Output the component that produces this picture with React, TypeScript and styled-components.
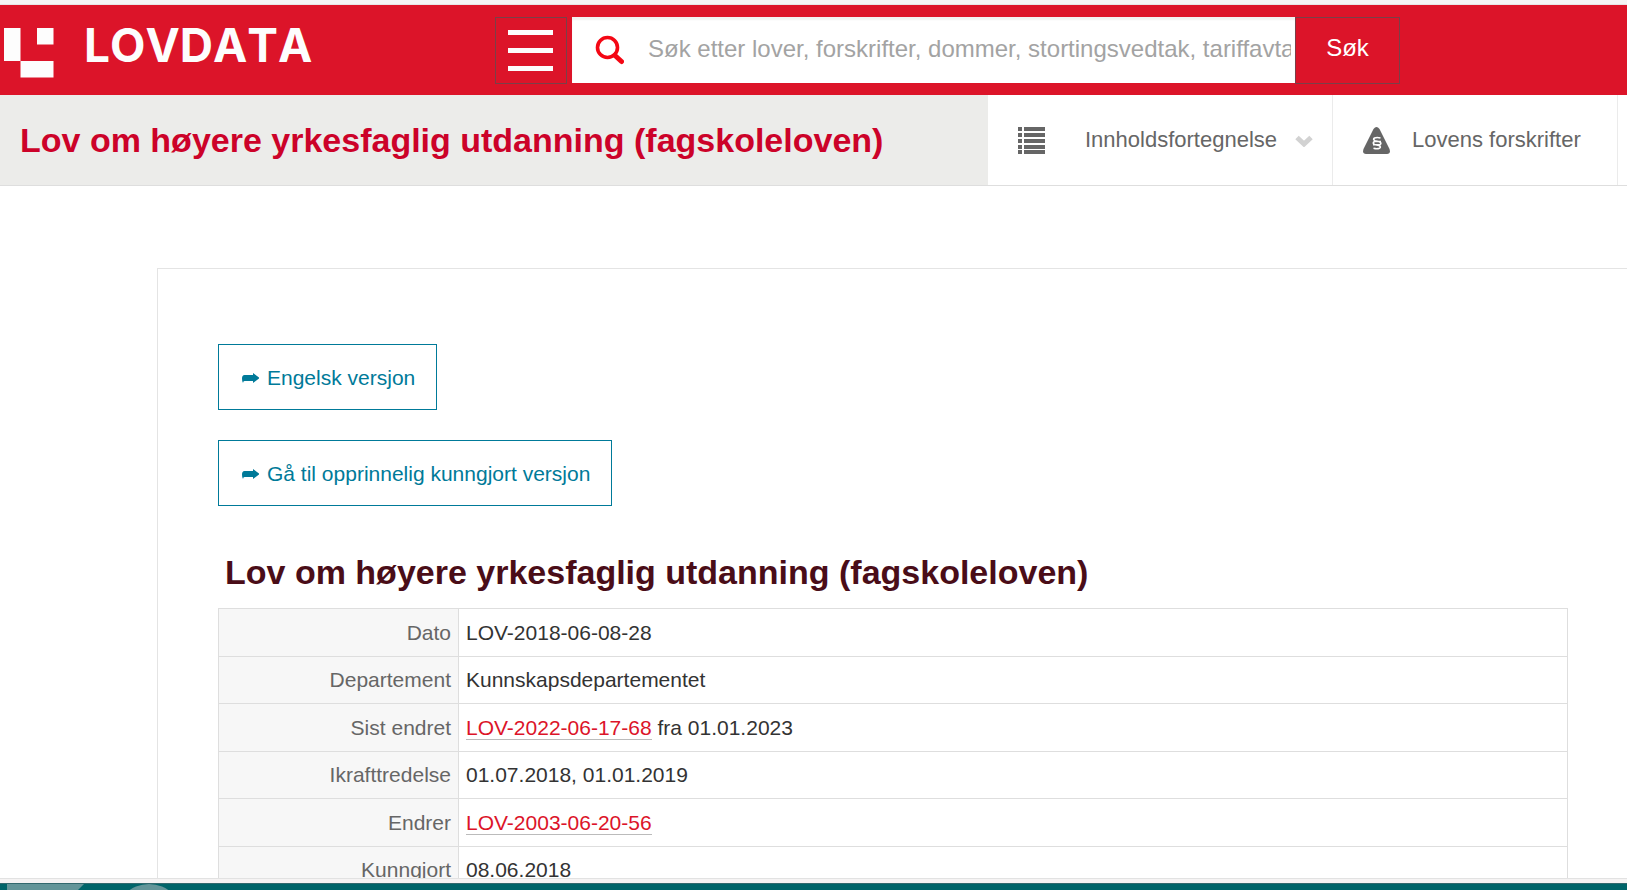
import React from "react";
import styled, { createGlobalStyle } from "styled-components";

const GlobalStyle = createGlobalStyle`
  *, *::before, *::after { box-sizing: border-box; }
  body {
    margin: 0;
    background: #fff;
    color: #333;
    font-family: Arial, "Liberation Sans", sans-serif;
    font-size: 21px;
    line-height: 24px;
  }
  button, input { font: inherit; }
  svg { flex: none; }
`;

const Screen = styled.div`
  display: flex;
  flex-direction: column;
  height: 100vh;
  overflow: hidden;
`;

const WindowTop = styled.div`
  flex: none;
  height: 5px;
  background: #f5f5f5;
  border-bottom: 1px solid #e6e6e6;
`;

const Header = styled.header`
  flex: none;
  display: flex;
  align-items: center;
  height: 90px;
  background: #dc1429;
`;

const Brand = styled.a`
  flex: none;
  display: flex;
  align-items: flex-start;
  gap: 30px;
  width: 495px;
  height: 56px;
  padding: 6px 0 0 4px;
  color: #fdfdfd;
  text-decoration: none;
`;

const BrandName = styled.span`
  font-family: Inter, sans-serif;
  font-kerning: none;
  font-size: 46px;
  font-weight: 700;
  line-height: 34px;
`;

const MenuButton = styled.button`
  flex: none;
  display: flex;
  flex-direction: column;
  justify-content: space-between;
  width: 72px;
  height: 67px;
  margin-right: 5px;
  padding: 12px 13px 12px 12px;
  border: 1px solid #7a3f48;
  background: none;
`;

const MenuLine = styled.span`
  height: 5px;
  background: #fdfdfd;
`;

const SearchForm = styled.form`
  flex: 1;
  display: flex;
  align-items: center;
  min-width: 0;
  margin-right: 227px;
`;

const SearchField = styled.label`
  flex: 1;
  display: flex;
  align-items: center;
  gap: 24px;
  min-width: 0;
  height: 66px;
  padding: 0 4px 0 23px;
  background: #fff;
  box-shadow: inset 0 3px 2px #f2f2f2;
`;

const SearchInput = styled.input`
  flex: 1;
  min-width: 0;
  padding: 0 0 2px;
  border: 0;
  outline: 0;
  background: none;
  font-size: 24px;
  &::placeholder { color: #a3a3a3; opacity: 1; }
`;

const SearchButton = styled.button`
  flex: none;
  width: 105px;
  height: 67px;
  padding: 0 0 4px;
  border: 1px solid #7a3f48;
  background: none;
  color: #fff;
  font-size: 24px;
`;

const TitleBar = styled.div`
  flex: none;
  display: flex;
  height: 91px;
  border-bottom: 1px solid #dedede;
`;

const BarTitle = styled.div`
  flex: 1;
  display: flex;
  align-items: center;
  min-width: 0;
  padding-left: 20px;
  background: #ececea;
  color: #cc0229;
  font-size: 34px;
  font-weight: 700;
  white-space: nowrap;
`;

const BarNav = styled.nav`
  flex: none;
  display: flex;
  padding-right: 9px;
`;

const BarItem = styled.a<{ $width: number; $gap: number }>`
  display: flex;
  align-items: center;
  width: ${(p) => p.$width}px;
  padding: 0 19px 0 30px;
  border-right: 1px solid #ebebeb;
  color: #666;
  font-size: 22px;
  text-decoration: none;
  white-space: nowrap;

  > svg { margin-right: ${(p) => p.$gap}px; }
`;

const ItemEnd = styled.span`
  display: flex;
  margin-left: auto;
`;

const Content = styled.main`
  flex: 1;
  min-height: 0;
  overflow: hidden;
  padding: 82px 0 0 157px;
`;

const Document = styled.article`
  padding: 75px 59px 60px 60px;
  border: 1px solid #e4e4e4;
  border-right: 0;
`;

const Actions = styled.div`
  display: flex;
  flex-direction: column;
  align-items: flex-start;
  gap: 30px;
`;

const ActionLink = styled.a`
  display: flex;
  align-items: center;
  gap: 8px;
  height: 66px;
  padding: 2px 21px 0 23px;
  border: 1px solid #007a99;
  color: #007a99;
  text-decoration: none;
`;

const Heading = styled.h1`
  margin: 46px 0 16px;
  padding-left: 7px;
  color: #4a0d18;
  font-size: 34px;
  line-height: 40px;
`;

const MetaTable = styled.table`
  width: 100%;
  border-collapse: collapse;
  table-layout: fixed;
`;

const MetaRow = styled.tr`
  height: 48px;
  &:nth-child(even) { height: 47px; }
`;

const MetaLabel = styled.th`
  width: 240px;
  padding: 0 7px;
  border: 1px solid #dedede;
  background: #f7f7f7;
  color: #666;
  font-weight: 400;
  text-align: right;
`;

const MetaValue = styled.td`
  padding: 0 7px;
  border: 1px solid #dedede;
`;

const LawLink = styled.a`
  border-bottom: 1px solid #bbb;
  color: #dc1429;
  text-decoration: none;
`;

const WindowBottom = styled.div`
  flex: none;
  height: 5px;
  border-top: 1px solid #e2e2e2;
  background: #f5f3f3;
`;

const Desktop = styled.footer`
  flex: none;
  display: flex;
  height: 7px;
  background: #006469;
  border-top: 1px solid #33696e;
`;

const LogoMark = () => (
  <svg width="50" height="50" viewBox="0 0 50 50" fill="#fdfdfd" aria-hidden="true">
    <path d="M0 0h16.5v33H0zM33 0h16.5v16.5H33zM16.5 33h33v16.5h-33z" />
  </svg>
);

const SearchIcon = () => (
  <svg width="29" height="30" viewBox="0 0 29 30" fill="none" stroke="#f40714" aria-hidden="true">
    <circle cx="12.500" cy="12.500" r="10" strokeWidth="3.600" />
    <path d="M20 20.500l6.500 6" strokeWidth="5" strokeLinecap="round" />
  </svg>
);

const ListIcon = () => (
  <svg width="27" height="27" viewBox="0 0 27 27" fill="#666" aria-hidden="true">
    {[0, 6, 12, 18, 23].map((y) => (
      <path key={y} d={`M0 ${y}h4v4H0zM6 ${y}h21v4H6z`} />
    ))}
  </svg>
);

const ParagraphIcon = () => (
  <svg width="27" height="27" viewBox="0 0 27 27" aria-hidden="true">
    <path d="M10.500 2Q13.500-2 16.500 2L26.500 22Q28 27 24 27H3Q-1 27 .500 22z" fill="#666" />
    <path
      d="M17.500 11q-3.500-1-6 0q-2 1.500 .5 2.700l4.500 1q2.500 1.300 .5 3h-7M18 14.500h-6.500q-2.500 1.500 0 3l4.500 1q2.500 1.300 .5 2.700q-2.500 1-6 0"
      fill="none"
      stroke="#fff"
      strokeWidth="1.600"
    />
  </svg>
);

const ChevronIcon = () => (
  <svg width="18" height="13" viewBox="0 0 18 13" fill="none" stroke="#d2d2d2" aria-hidden="true">
    <path d="M2 3.500l7 6.500l7-6.500" strokeWidth="5" />
  </svg>
);

const ArrowIcon = () => (
  <svg width="17" height="11" viewBox="0 0 17 11" fill="#007a99" aria-hidden="true">
    <path d="M11 0l6.500 5l-6.500 5V8H2.500Q1.200 8 1 10Q0 9 0 5.500Q0 2 2.500 2H11z" />
  </svg>
);

const DesktopShapes = () => (
  <svg width="180" height="6" viewBox="0 0 180 6" fill="#639599" aria-hidden="true">
    <path d="M7 0H84L78 6H7z" />
    <circle cx="149" cy="34" r="34" />
  </svg>
);

const rows: { label: string; value?: string; law?: string }[] = [
  { label: "Dato", value: "LOV-2018-06-08-28" },
  { label: "Departement", value: "Kunnskapsdepartementet" },
  { label: "Sist endret", law: "LOV-2022-06-17-68", value: " fra 01.01.2023" },
  { label: "Ikrafttredelse", value: "01.07.2018, 01.01.2019" },
  { label: "Endrer", law: "LOV-2003-06-20-56" },
  { label: "Kunngjort", value: "08.06.2018" },
];

const title = "Lov om høyere yrkesfaglig utdanning (fagskoleloven)";

export default function App() {
  return (
    <Screen>
      <GlobalStyle />
      <WindowTop />
      <Header>
        <Brand href="#">
          <LogoMark />
          <BrandName>LOVDATA</BrandName>
        </Brand>
        <MenuButton type="button" aria-label="Meny">
          <MenuLine />
          <MenuLine />
          <MenuLine />
        </MenuButton>
        <SearchForm role="search" onSubmit={(e) => e.preventDefault()}>
          <SearchField>
            <SearchIcon />
            <SearchInput
              type="text"
              aria-label="Søk"
              placeholder="Søk etter lover, forskrifter, dommer, stortingsvedtak, tariffavtaler"
            />
          </SearchField>
          <SearchButton type="submit">Søk</SearchButton>
        </SearchForm>
      </Header>
      <TitleBar>
        <BarTitle>{title}</BarTitle>
        <BarNav>
          <BarItem href="#innhold" $width={345} $gap={40}>
            <ListIcon />
            Innholdsfortegnelse
            <ItemEnd>
              <ChevronIcon />
            </ItemEnd>
          </BarItem>
          <BarItem href="#forskrifter" $width={285} $gap={22}>
            <ParagraphIcon />
            Lovens forskrifter
          </BarItem>
        </BarNav>
      </TitleBar>
      <Content>
        <Document>
          <Actions>
            <ActionLink href="#engelsk">
              <ArrowIcon />
              Engelsk versjon
            </ActionLink>
            <ActionLink href="#kunngjort">
              <ArrowIcon />
              Gå til opprinnelig kunngjort versjon
            </ActionLink>
          </Actions>
          <Heading>{title}</Heading>
          <MetaTable>
            <tbody>
              {rows.map((row) => (
                <MetaRow key={row.label}>
                  <MetaLabel scope="row">{row.label}</MetaLabel>
                  <MetaValue>
                    {row.law && <LawLink href="#lov">{row.law}</LawLink>}
                    {row.value}
                  </MetaValue>
                </MetaRow>
              ))}
            </tbody>
          </MetaTable>
        </Document>
      </Content>
      <WindowBottom />
      <Desktop>
        <DesktopShapes />
      </Desktop>
    </Screen>
  );
}
